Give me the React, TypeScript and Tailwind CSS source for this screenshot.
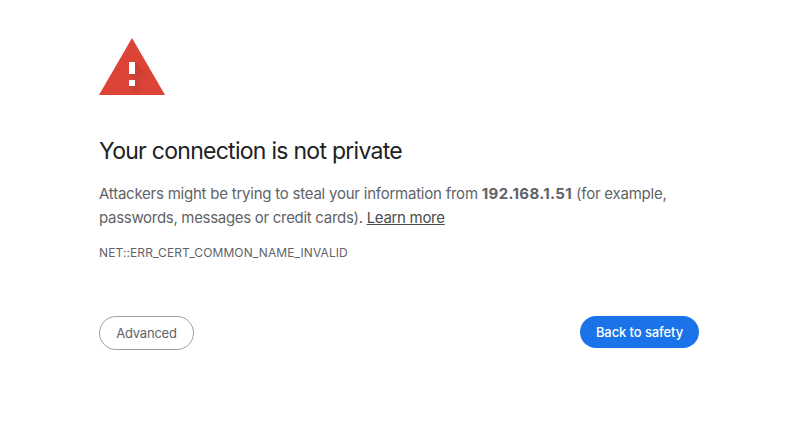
export default function App() {
  return (
    <main className="h-[428px] w-full bg-white pl-[99px] pt-[38px] font-['Inter',sans-serif] text-[#5f6368]">
      <div className="w-[600px]">
        <svg className="block" width="66" height="57" viewBox="0 0 66 57">
          <defs>
            <linearGradient id="shade" gradientUnits="userSpaceOnUse" x1="32" y1="30" x2="46" y2="44">
              <stop stopColor="#7b271e" stopOpacity=".28" />
              <stop offset="1" stopColor="#7b271e" stopOpacity="0" />
            </linearGradient>
            <linearGradient id="dotShade" gradientUnits="userSpaceOnUse" x1="33" y1="45" x2="43" y2="55">
              <stop stopColor="#7b271e" stopOpacity=".28" />
              <stop offset="1" stopColor="#7b271e" stopOpacity="0" />
            </linearGradient>
          </defs>
          <path d="M33 0 66 57H0Z" fill="#db4437" />
          <path d="M36 24 55 43 63 57H51L30 36h6Z" fill="url(#shade)" />
          <path d="M36 42 51 57H39L30 48h6Z" fill="url(#dotShade)" />
          <path d="M30 24h6v12h-6ZM30 42h6v6h-6Z" fill="#fff" />
        </svg>
        <h1 className="mt-[41px] whitespace-nowrap text-[23px] leading-[30px] tracking-[-0.72px] text-[#202124]">Your connection is not private</h1>
        <div className="mt-4 whitespace-nowrap text-[15px] leading-6">
          <p className="tracking-[-0.23px]">Attackers might be trying to steal your information from <strong className="tracking-[0.35px]">192.168.1.51</strong> (for example,</p>
          <p className="tracking-[-0.3px]">passwords, messages or credit cards). <a className="text-[#4d4d4d] underline">Learn more</a></p>
        </div>
        <p className="mt-[14px] text-[12px] leading-[18px] tracking-[0.1px]">NET::ERR_CERT_COMMON_NAME_INVALID</p>
        <div className="mt-[54px] flex items-start justify-between text-[13px]">
          <button className="h-[34px] w-[95px] rounded-full border border-[#9aa0a6] pt-px tracking-[-0.22px]">Advanced</button>
          <button className="h-8 w-[119px] rounded-full bg-[#1a73e8] pt-px font-medium tracking-[-0.1px] text-white">Back to safety</button>
        </div>
      </div>
    </main>
  );
}
